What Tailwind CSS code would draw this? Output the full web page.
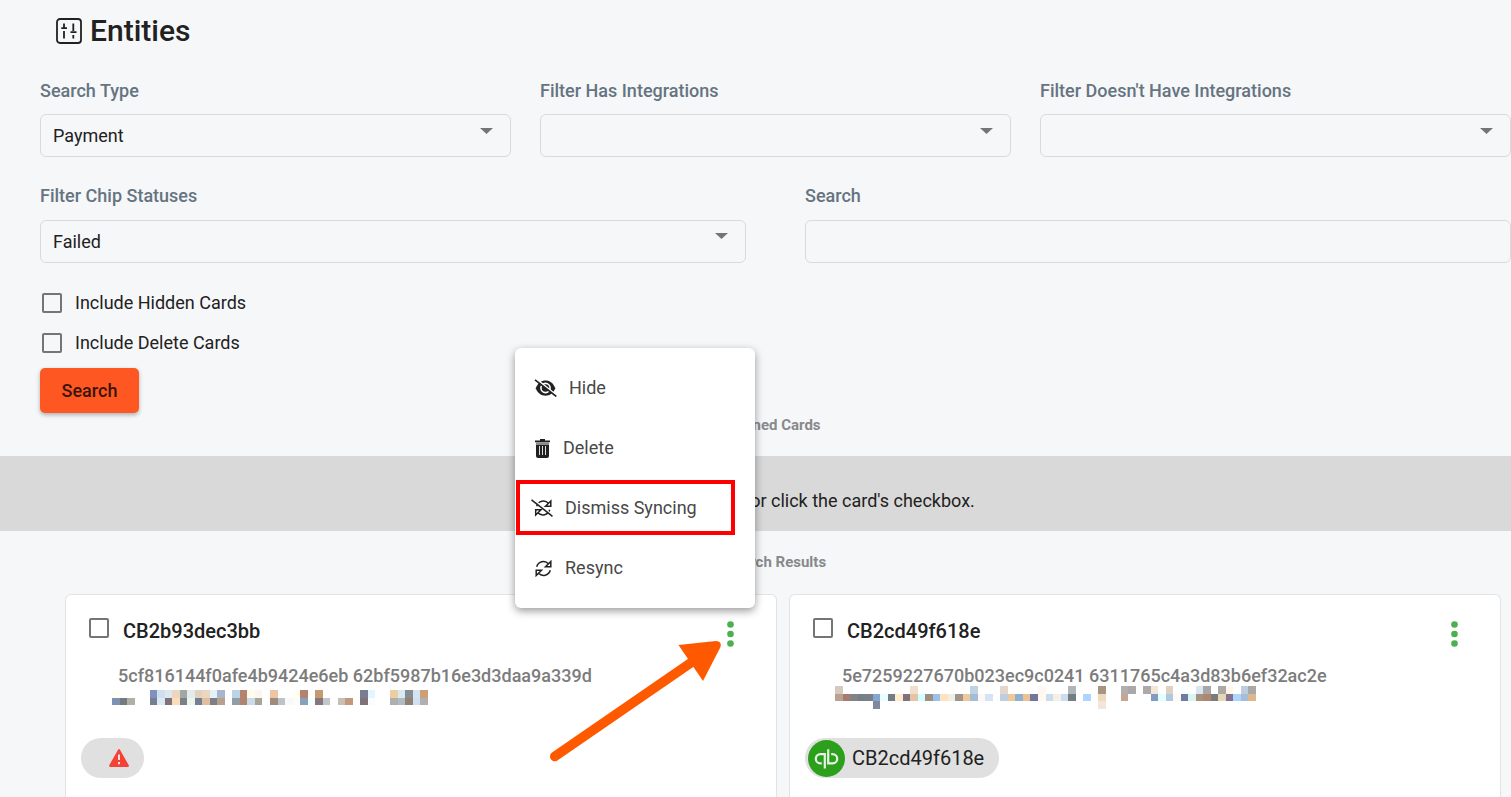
<!DOCTYPE html>
<html lang="en">
<head>
<meta charset="utf-8">
<title>Entities</title>
<script src="https://cdn.jsdelivr.net/npm/@tailwindcss/browser@4"></script>
</head>
<body class="bg-[#f6f7f9] font-['Roboto',sans-serif] text-[#212121]">
<main class="relative flex h-screen flex-col overflow-hidden">
  <header class="flex h-[62px] shrink-0 items-center gap-2 pl-14">
    <svg class="size-[26px]" viewBox="0 0 26 26" fill="none" stroke="#212121" stroke-width="1.800" aria-hidden="true">
      <rect x="1" y="1" width="24" height="24" rx="3"/>
      <path d="M8 5.500V10M5.300 10.200H11M8 13V20.500M17.300 5.500V13M14.500 14.200H20.500M17.300 17V20.500"/>
    </svg>
    <h1 class="text-[30px] leading-9 font-medium">Entities</h1>
  </header>

  <form class="flex shrink-0 flex-col pl-10 text-lg" onsubmit="return false">
    <div class="grid grid-cols-3 gap-x-[29px] pt-[17px]">
      <div class="flex flex-col gap-[11px]">
        <label for="type" class="leading-6 font-medium text-[#657480]">Search Type</label>
        <div class="relative">
          <select id="type" class="h-[43px] w-full appearance-none rounded-md border border-[#d8dadc] bg-transparent px-3"><option>Payment</option></select>
          <svg class="pointer-events-none absolute top-3.5 right-[18px] h-1.5 w-[13px]" viewBox="0 0 13 6" fill="#757575" aria-hidden="true"><path d="M0 0h13L6.500 6z"/></svg>
        </div>
      </div>
      <div class="flex flex-col gap-[11px]">
        <label for="has" class="leading-6 font-medium text-[#657480]">Filter Has Integrations</label>
        <div class="relative">
          <select id="has" class="h-[43px] w-full appearance-none rounded-md border border-[#d8dadc] bg-transparent px-3"><option></option></select>
          <svg class="pointer-events-none absolute top-3.5 right-[18px] h-1.5 w-[13px]" viewBox="0 0 13 6" fill="#757575" aria-hidden="true"><path d="M0 0h13L6.500 6z"/></svg>
        </div>
      </div>
      <div class="flex flex-col gap-[11px]">
        <label for="hasnot" class="leading-6 font-medium text-[#657480]">Filter Doesn't Have Integrations</label>
        <div class="relative">
          <select id="hasnot" class="h-[43px] w-full appearance-none rounded-md border border-[#d8dadc] bg-transparent px-3"><option></option></select>
          <svg class="pointer-events-none absolute top-3.5 right-[18px] h-1.5 w-[13px]" viewBox="0 0 13 6" fill="#757575" aria-hidden="true"><path d="M0 0h13L6.500 6z"/></svg>
        </div>
      </div>
    </div>
    <div class="grid grid-cols-2 gap-x-[59px] pt-[27px]">
      <div class="flex flex-col gap-3">
        <label for="chips" class="leading-6 font-medium text-[#657480]">Filter Chip Statuses</label>
        <div class="relative">
          <select id="chips" class="h-[43px] w-full appearance-none rounded-md border border-[#d8dadc] bg-transparent px-3"><option>Failed</option></select>
          <svg class="pointer-events-none absolute top-[13px] right-[18px] h-1.5 w-[13px]" viewBox="0 0 13 6" fill="#757575" aria-hidden="true"><path d="M0 0h13L6.500 6z"/></svg>
        </div>
      </div>
      <div class="flex flex-col gap-3">
        <label for="q" class="leading-6 font-medium text-[#657480]">Search</label>
        <input id="q" type="text" class="h-[43px] w-full rounded-md border border-[#d8dadc] bg-transparent px-3">
      </div>
    </div>
    <div class="flex flex-col pt-5 pl-0.5">
      <label class="flex h-10 items-center gap-[13px]"><input type="checkbox" class="size-5 appearance-none rounded-xs border-2 border-[#757575]">Include Hidden Cards</label>
      <label class="flex h-10 items-center gap-[13px]"><input type="checkbox" class="size-5 appearance-none rounded-xs border-2 border-[#757575]">Include Delete Cards</label>
    </div>
    <button class="mt-[5px] h-[45px] w-[99px] rounded-[5px] bg-[#ff5722] font-medium text-[#3a150b] shadow-[0_2px_4px_rgba(0,0,0,0.3)]">Search</button>
  </form>

  <h2 class="shrink-0 pl-10 text-center text-[15px] leading-6 font-bold text-[#88898b]">Pinned Cards</h2>
  <p class="mt-[19px] flex h-[75px] shrink-0 items-center justify-center bg-[#d9d9d9] pt-[15px] pl-[214px] text-lg">or click the card's checkbox.</p>
  <h2 class="shrink-0 pt-[19px] pl-10 text-center text-[15px] leading-6 font-bold text-[#88898b]">Search Results</h2>

  <section class="mt-5 grid flex-1 grid-cols-2 gap-3 pr-2.5 pl-[65px]">
    <article class="min-w-0 rounded-t-md border border-b-0 border-[#e1e3e6] bg-white pl-[15px]">
      <div class="flex h-[66px] items-start gap-3.5 pt-[22px] pr-[42px] pl-2">
        <input id="c1" type="checkbox" class="mt-px size-5 appearance-none rounded-xs border-2 border-[#757575]">
        <label for="c1" class="flex-1 text-xl leading-7 font-medium">CB2b93dec3bb</label>
        <button aria-label="Card menu" class="mt-1"><svg class="h-[26px] w-[7px]" viewBox="0 0 7 26" fill="#4caf50"><circle cx="3.500" cy="3.500" r="3.300"/><circle cx="3.500" cy="13" r="3.300"/><circle cx="3.500" cy="22.500" r="3.300"/></svg></button>
      </div>
      <p class="pt-[3px] pl-[37px] text-lg leading-6 font-medium text-[#7c7c7c]">5cf816144f0afe4b9424e6eb 62bf5987b16e3d3daa9a339d</p>
      <svg class="mt-0.5 ml-[31px] h-[15px] w-[316px]" viewBox="0 0 42 2" preserveAspectRatio="none" shape-rendering="crispEdges" data-mosaic="a" aria-hidden="true"></svg>
      <div class="mt-[33px] flex h-10 w-[63px] items-center rounded-full bg-[#e0e0e0] pl-7">
        <svg class="h-[18px] w-5" viewBox="0 0 20 18" aria-label="Error"><path d="M10 1.200 18.800 16.800H1.200Z" fill="#f44336" stroke="#f44336" stroke-width="2.200" stroke-linejoin="round"/><path d="M10 5.500V11M10 13V15.200" stroke="#e0e0e0" stroke-width="2"/></svg>
      </div>
    </article>
    <article class="min-w-0 rounded-t-md border border-b-0 border-[#e1e3e6] bg-white pl-[15px]">
      <div class="flex h-[66px] items-start gap-3.5 pt-[22px] pr-[42px] pl-2">
        <input id="c2" type="checkbox" class="mt-px size-5 appearance-none rounded-xs border-2 border-[#757575]">
        <label for="c2" class="flex-1 text-xl leading-7 font-medium">CB2cd49f618e</label>
        <button aria-label="Card menu" class="mt-1"><svg class="h-[26px] w-[7px]" viewBox="0 0 7 26" fill="#4caf50"><circle cx="3.500" cy="3.500" r="3.300"/><circle cx="3.500" cy="13" r="3.300"/><circle cx="3.500" cy="22.500" r="3.300"/></svg></button>
      </div>
      <p class="pt-[3px] pl-[37px] text-lg leading-6 font-medium text-[#7c7c7c]">5e7259227670b023ec9c0241 6311765c4a3d83b6ef32ac2e</p>
      <svg class="-mt-0.5 ml-[30px] h-[23px] w-[421px]" viewBox="0 0 56 3" preserveAspectRatio="none" shape-rendering="crispEdges" data-mosaic="b" aria-hidden="true"></svg>
      <div class="mt-[29px] inline-flex h-10 items-center gap-[7px] rounded-full bg-[#e0e0e0] pr-[15px] pl-[3px] text-xl">
        <svg class="size-[37px]" viewBox="0 0 37 37" fill="none" stroke="#e8f3e6" stroke-width="2.200" aria-hidden="true"><circle cx="18.500" cy="18.500" r="18.500" fill="#2ca01c" stroke="none"/><path d="M16.800 28.500V14.200H12.400A4.600 4.600 0 0 0 12.400 23.400H13.800M20.200 9.300V23.400H24.600A4.600 4.600 0 0 0 24.600 14.200H23.200"/></svg>
        <span>CB2cd49f618e</span>
      </div>
    </article>
  </section>

  <div role="menu" class="absolute top-[348px] left-[515px] flex w-60 flex-col rounded-md bg-white py-2.5 text-lg text-[#484848] shadow-[0_3px_8px_rgba(0,0,0,0.4)]">
    <button role="menuitem" class="flex h-[60px] items-center gap-3 pl-[19px]">
      <svg class="h-[18px] w-[23px]" viewBox="0 0 23 18" fill="none" aria-hidden="true"><path d="M1.800 9.300C5-1.200 18-1.200 21.200 9.300C18 19.200 5 19.200 1.800 9.300Z" fill="#212121"/><circle cx="11.500" cy="9" r="4.600" stroke="#fff" stroke-width="1.600"/><path d="M2.500 .2 23 16.500" stroke="#fff" stroke-width="1.600"/><path d="M1 .8 22.300 17.500" stroke="#212121" stroke-width="1.600"/></svg>Hide</button>
    <button role="menuitem" class="flex h-[60px] items-center gap-[13px] pl-5">
      <svg class="h-[19px] w-[15px]" viewBox="0 0 15 19" aria-hidden="true"><path d="M5 0h5v1.500h5V3.300H0V1.500H5ZM1 5.500H14V17Q14 19 12 19H3Q1 19 1 17Z" fill="#212121"/><path d="M1 3.300H14V5.500H1Z" fill="#8a8a8a"/><path d="M4.500 7V16M7.500 7V16M10.500 7V16" stroke="#ddd" stroke-width="1"/></svg>Delete</button>
    <button role="menuitem" class="flex h-[60px] items-center gap-3 pl-4">
      <svg class="h-[18px] w-[22px]" viewBox="0 0 22 18" fill="none" stroke="#212121" stroke-width="1.500" aria-hidden="true"><path d="M5.700 7.200A7 7 0 0 1 17.600 4.400M19.800 2V7.300H14.500ZM18.700 10.800A7 7 0 0 1 6.800 13.600M4.700 16V10.700H10Z"/><path d="M2 0 23 17.500" stroke="#fff"/><path d="M.5 .8 21.500 17.300"/></svg>Dismiss Syncing</button>
    <button role="menuitem" class="flex h-[60px] items-center gap-[13px] pl-5">
      <svg class="h-[17px] w-[17px]" viewBox="0 0 17 17" fill="none" stroke="#212121" stroke-width="1.500" aria-hidden="true"><path d="M1.700 6.700A7 7 0 0 1 13.600 3.900M15.800 1.500V6.800H10.500ZM15.300 10.300A7 7 0 0 1 3.400 13.100M1.200 15.500V10.200H6.500Z"/></svg>Resync</button>
  </div>
  <div class="pointer-events-none absolute top-[480px] left-[516px] h-[55px] w-[219px] border-4 border-[#f00]"></div>
  <svg class="pointer-events-none absolute top-[638px] left-[548px] h-[126px] w-[176px]" viewBox="548 638 176 126" fill="#ff5900" aria-hidden="true"><path d="M554.700 756.500 692 662" stroke="#ff5900" stroke-width="9.500" stroke-linecap="round"/><path d="M678.500 645 716 641Q722 641 720.500 647L703 681Z"/></svg>
</main>
<script>
const mosaics = {
  a: [
    {0:'#fffef5',5:'#8090c0',6:'#cfdff0',7:'#dbe8f0',8:'#ecd6bf',9:'#a0a8a5',10:'#e3ecec',11:'#dfd3bf',12:'#ebd7bf',13:'#e4f1f8',14:'#a9b5cb',16:'#bdd3e6',17:'#b3836f',18:'#fffdea',19:'#faf6f0',21:'#ecc5a4',24:'#fffff2',25:'#b3836f',27:'#c59a70',33:'#7a7d92',34:'#e3f5ff',37:'#efcca2',38:'#d8ebf0',39:'#868c90',40:'#d3e4f3',41:'#cc9f76'},
    {0:'#7b92b5',1:'#747b80',2:'#b0b0a8',5:'#748092',6:'#daeaf2',7:'#7f7378',8:'#ffdcb8',9:'#7a8085',10:'#eef5ee',11:'#748092',12:'#dfbf9f',13:'#7a8085',14:'#b9a08c',16:'#939da5',17:'#b08270',18:'#c9dae8',19:'#a8a596',21:'#9f8a7b',22:'#bfc3c5',23:'#f9f9f9',24:'#fcfcfc',25:'#86a0bd',26:'#f8ffff',27:'#85777c',28:'#c3c7c8',30:'#c4c0b4',31:'#c5977c',33:'#80727a',34:'#fafdff',37:'#aeafb0',38:'#afbcc2',39:'#8f8273',40:'#d0e1f1',41:'#b0b0b0'}
  ],
  b: [
    {0:'#d8c9c0',10:'#f0decf',18:'#bfd2e2',22:'#e6d5ca',27:'#fff8f0',31:'#b0b5b8',35:'#a89280',38:'#b0b0b0',39:'#aaa8a8',41:'#aba9a9',42:'#f3e6d8',44:'#e0cfc3',46:'#f8ffff',48:'#d9e6f1',49:'#a8a6a8',51:'#aca8a8',52:'#fff6ea',54:'#bccddf',55:'#a8a8a8'},
    {0:'#b8a290',1:'#a97b70',2:'#808485',3:'#748087',4:'#7a8085',5:'#83a6d3',6:'#e8fdff',7:'#757c88',8:'#ffeccc',9:'#80727a',10:'#e3c4a5',11:'#cfffff',12:'#9f8f80',13:'#98c2e8',14:'#ffe2bf',15:'#f1efe3',16:'#a0958c',17:'#efc99c',18:'#a3bdd4',19:'#fff8f2',20:'#d3e4f8',22:'#bdcfdf',23:'#eec899',24:'#8fb0ce',25:'#edc293',26:'#74759a',27:'#fff9f2',28:'#cbdcee',29:'#f5efe8',30:'#cbdcee',31:'#747c84',33:'#acd6ff',35:'#ecdac3',38:'#c5a694',42:'#829cbf',43:'#e3ffff',44:'#aec9de',45:'#fdf9f5',46:'#707c9f',47:'#d8f6ef',48:'#a6937f',49:'#af866f',50:'#7a7c7b',51:'#e6d6b5',52:'#84708f',53:'#acd6ff',54:'#a6bdd8',55:'#dbb990'},
    {5:'#80899a',35:'#f3e6d8'}
  ]
};
document.querySelectorAll('[data-mosaic]').forEach(svg => {
  mosaics[svg.dataset.mosaic].forEach((row, y) => Object.entries(row).forEach(([x, fill]) => {
    const r = document.createElementNS('http://www.w3.org/2000/svg', 'rect');
    r.setAttribute('x', x); r.setAttribute('y', y);
    r.setAttribute('width', 1); r.setAttribute('height', 1);
    r.setAttribute('fill', fill);
    svg.appendChild(r);
  }));
});
</script>
</body>
</html>
